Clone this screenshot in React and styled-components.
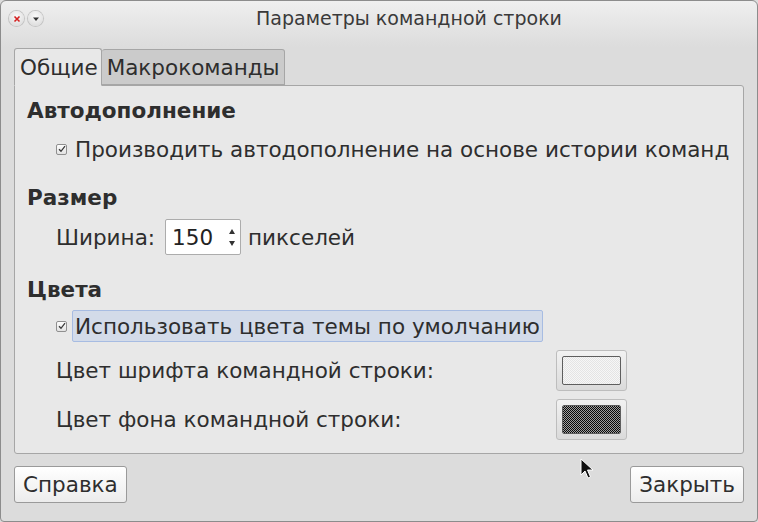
import styled, { createGlobalStyle } from "styled-components";

const GlobalStyle = createGlobalStyle`
  html, body {
    margin: 0;
    padding: 0;
    background: #dcdcdc;
  }
  body {
    font-family: "DejaVu Sans", "Noto Sans", sans-serif;
    color: #333;
  }
`;

const Window = styled.div`
  position: relative;
  width: 758px;
  height: 522px;
  box-sizing: border-box;
  border: 1px solid #8c8c8c;
  border-radius: 6px 6px 4px 4px;
  background: linear-gradient(#efefef 0, #dcdcdc 46px, #dcdcdc 100%);
  display: flex;
  flex-direction: column;
  overflow: hidden;
`;

const TitleBar = styled.div`
  position: relative;
  height: 34px;
  display: flex;
  align-items: center;
  justify-content: center;
  padding-left: 60px;
  font-size: 19px;
  color: #3a3a3a;
`;

const TitleButtons = styled.div`
  position: absolute;
  left: 8px;
  top: 10px;
  display: flex;
  gap: 4px;
`;

const RoundButton = styled.div`
  width: 15px;
  height: 15px;
  border-radius: 50%;
  background: radial-gradient(circle at 50% 35%, #fafafa, #d6d6d6);
  box-shadow: 0 0 0 1px #c4c4c4;
  display: flex;
  align-items: center;
  justify-content: center;
`;

const Body = styled.div`
  flex: 1;
  display: flex;
  flex-direction: column;
  padding: 12px 13px 0 13px;
`;

const TabRow = styled.div`
  display: flex;
  align-items: flex-end;
  height: 38px;
  position: relative;
  z-index: 1;
`;

const Tab = styled.div`
  box-sizing: border-box;
  height: ${(p) => (p.$active ? "38px" : "36px")};
  padding: ${(p) => (p.$active ? "0 3px 0 5px" : "0 4px 0 5px")};
  display: flex;
  align-items: center;
  font-size: 21.5px;
  color: #2e2e2e;
  background: ${(p) => (p.$active ? "#e8e8e8" : "#cbcbcb")};
  border: 1px solid #a6a6a6;
  border-bottom: ${(p) => (p.$active ? "1px solid #e8e8e8" : "1px solid #a6a6a6")};
  border-left: ${(p) => (p.$active ? "1px solid #a6a6a6" : "none")};
  border-radius: 3px 3px 0 0;
  margin-bottom: ${(p) => (p.$active ? "-1px" : "0")};
`;

const Panel = styled.div`
  box-sizing: border-box;
  height: 369px;
  background: #e8e8e8;
  border: 1px solid #a6a6a6;
  border-radius: 0 3px 3px 3px;
  padding: 10px 12px 0 12px;
  display: flex;
  flex-direction: column;
`;

const Heading = styled.div`
  height: 30px;
  line-height: 30px;
  font-size: 21.5px;
  font-weight: bold;
  color: #2e2e2e;
  margin-top: ${(p) => p.$mt || 0}px;
`;

const Row = styled.div`
  display: flex;
  align-items: center;
  height: ${(p) => p.$h || 30}px;
  margin-top: ${(p) => p.$mt || 0}px;
  padding-left: 29px;
  font-size: 21.5px;
  color: #2e2e2e;
  white-space: nowrap;
`;

const CheckBox = styled.span`
  box-sizing: border-box;
  width: 11px;
  height: 11px;
  border: 1px solid #8f8f8f;
  border-radius: 2px;
  background: linear-gradient(#fdfdfd, #e2e2e2);
  display: inline-flex;
  align-items: center;
  justify-content: center;
  margin-right: 5px;
  flex-shrink: 0;
`;

const CheckLabel = styled.span`
  box-sizing: border-box;
  display: flex;
  align-items: center;
  height: 32px;
  padding: 0 2px;
  border: 1px solid ${(p) => (p.$focus ? "#a7bce2" : "transparent")};
  border-radius: 2px;
  background: ${(p) => (p.$focus ? "#d3dbe9" : "transparent")};
`;

const SpinBox = styled.div`
  box-sizing: border-box;
  width: 76px;
  height: 36px;
  margin: 0 7px 0 10px;
  background: #fff;
  border: 1px solid #acacac;
  border-radius: 2px;
  display: flex;
  align-items: center;
  justify-content: space-between;
  padding: 0 5px 0 6px;
  font-size: 21.5px;
  color: #222;
`;

const SpinArrows = styled.div`
  display: flex;
  flex-direction: column;
  align-items: center;
  gap: 7px;
`;

const ColorRow = styled(Row)`
  justify-content: space-between;
  padding-right: 104px;
`;

const ColorButton = styled.div`
  box-sizing: border-box;
  width: 71px;
  height: 41px;
  border: 1px solid #bdbdbd;
  border-radius: 3px;
  background: linear-gradient(#f2f2f2, #dadada);
  display: flex;
  align-items: center;
  justify-content: center;
`;

const Swatch = styled.div`
  box-sizing: border-box;
  width: 59px;
  height: 29px;
  border: 1px solid #5e5e5e;
  border-radius: 2px;
  background: ${(p) =>
    p.$dark
      ? "repeating-conic-gradient(#0a0a0a 0 25%, #a0a0a0 0 50%) 0 0 / 2px 2px"
      : "repeating-conic-gradient(#f7f7f7 0 25%, #e4e4e4 0 50%) 0 0 / 2px 2px"};
`;

const Footer = styled.div`
  display: flex;
  justify-content: space-between;
  margin-top: 12px;
`;

const PushButton = styled.div`
  box-sizing: border-box;
  height: 37px;
  padding: 0 8px;
  display: flex;
  align-items: center;
  font-size: 21.5px;
  color: #2e2e2e;
  border: 1px solid #9a9a9a;
  border-radius: 3px;
  background: linear-gradient(#ffffff, #ececec);
`;

const Cursor = styled.svg`
  position: absolute;
  left: 579px;
  top: 457px;
`;

const Check = () => (
  <svg width="8" height="8" viewBox="0 0 8 8">
    <path d="M1 4.2 L3 6.3 L7 1.2" fill="none" stroke="#3a3a3a" strokeWidth="1.3" />
  </svg>
);

export default function App() {
  return (
    <>
      <GlobalStyle />
      <Window>
        <TitleBar>
          <TitleButtons>
            <RoundButton>
              <svg width="8" height="8" viewBox="0 0 8 8">
                <path d="M1.5 1.5 L6.5 6.5 M6.5 1.5 L1.5 6.5" stroke="#d42020" strokeWidth="1.6" />
              </svg>
            </RoundButton>
            <RoundButton>
              <svg width="8" height="8" viewBox="0 0 8 8">
                <path d="M1 2.5 L7 2.5 L4 6 Z" fill="#333" />
              </svg>
            </RoundButton>
          </TitleButtons>
          Параметры командной строки
        </TitleBar>
        <Body>
          <TabRow>
            <Tab $active>Общие</Tab>
            <Tab>Макрокоманды</Tab>
          </TabRow>
          <Panel>
            <Heading>Автодополнение</Heading>
            <Row $mt={8}>
              <CheckBox>
                <Check />
              </CheckBox>
              <CheckLabel>Производить автодополнение на основе истории команд</CheckLabel>
            </Row>
            <Heading $mt={19}>Размер</Heading>
            <Row $h={36} $mt={6}>
              Ширина:
              <SpinBox>
                150
                <SpinArrows>
                  <svg width="6" height="5" viewBox="0 0 6 5">
                    <path d="M0 5 L3 0 L6 5 Z" fill="#333" />
                  </svg>
                  <svg width="6" height="5" viewBox="0 0 6 5">
                    <path d="M0 0 L3 5 L6 0 Z" fill="#333" />
                  </svg>
                </SpinArrows>
              </SpinBox>
              пикселей
            </Row>
            <Heading $mt={20}>Цвета</Heading>
            <Row $h={32} $mt={5}>
              <CheckBox>
                <Check />
              </CheckBox>
              <CheckLabel $focus>Использовать цвета темы по умолчанию</CheckLabel>
            </Row>
            <ColorRow $h={41} $mt={8}>
              Цвет шрифта командной строки:
              <ColorButton>
                <Swatch />
              </ColorButton>
            </ColorRow>
            <ColorRow $h={41} $mt={8}>
              Цвет фона командной строки:
              <ColorButton>
                <Swatch $dark />
              </ColorButton>
            </ColorRow>
          </Panel>
          <Footer>
            <PushButton>Справка</PushButton>
            <PushButton>Закрыть</PushButton>
          </Footer>
        </Body>
        <Cursor width="14" height="22" viewBox="0 0 14 22">
          <path d="M1 1 L1 17 L5 13 L8 20 L10.5 19 L7.5 12 L13 12 Z" fill="#111" stroke="#fff" strokeWidth="1" />
        </Cursor>
      </Window>
    </>
  );
}
